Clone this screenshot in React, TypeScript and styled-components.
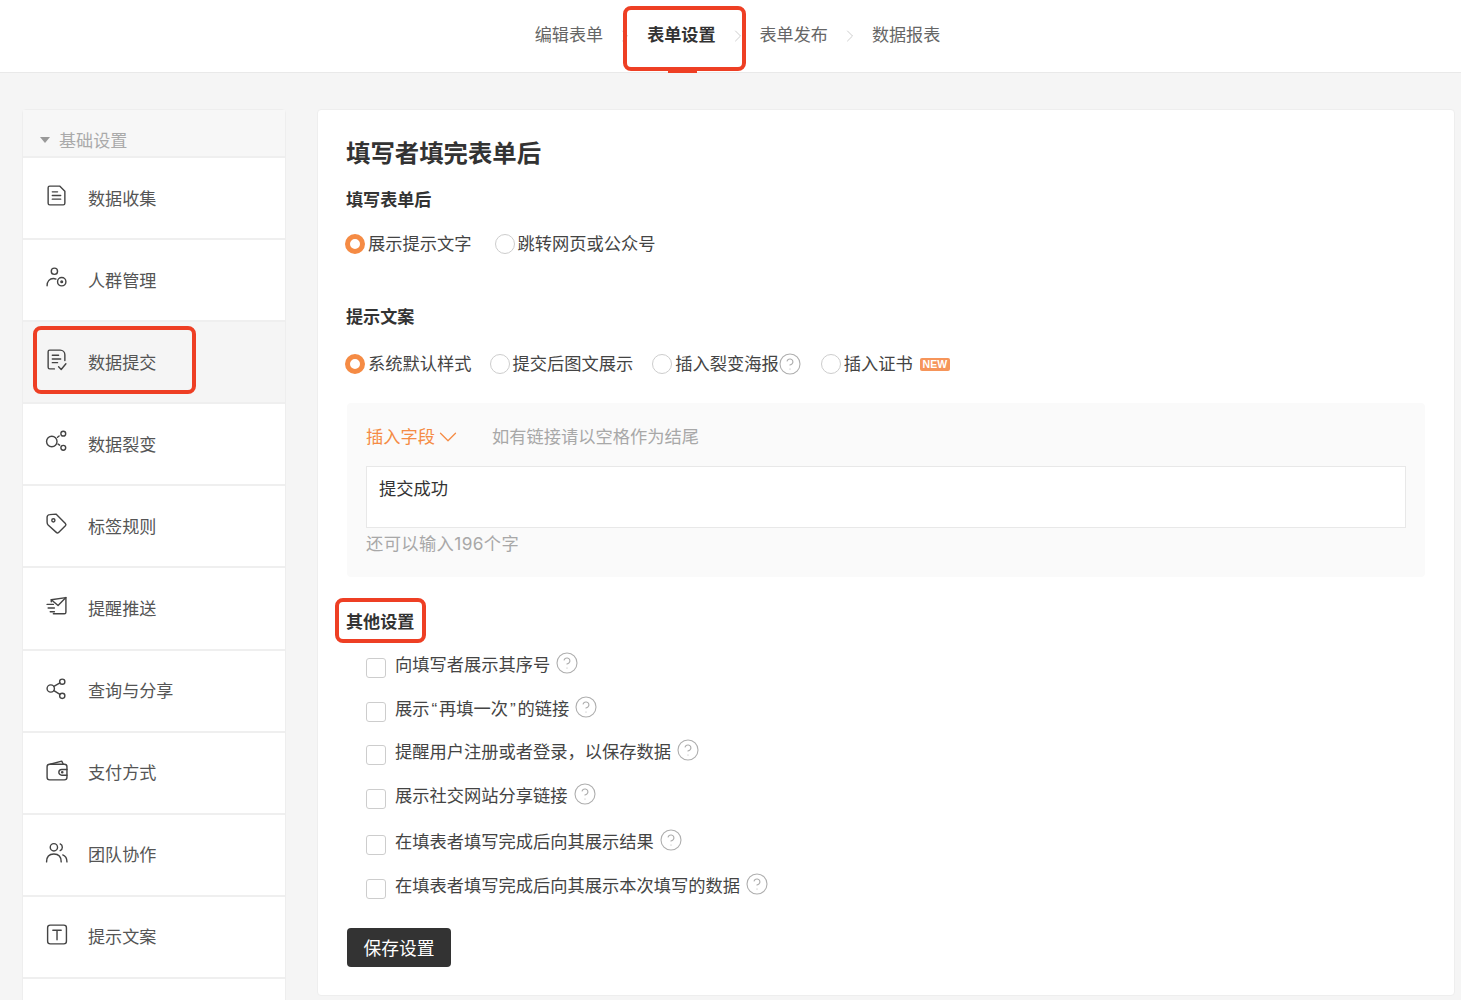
import React from "react";
import styled, { createGlobalStyle } from "styled-components";
import { ChevronDown, ChevronRight, CircleHelp } from "lucide-react";

const Global = createGlobalStyle`
  html, body { margin: 0; padding: 0; background: #f5f5f5; }
  body { font-family: "Liberation Sans", "Noto Sans CJK SC", sans-serif; font-size: 17.25px; color: #444; }
`;

const Page = styled.div`
  height: 1000px;
  overflow: hidden;
  background: #f5f5f5;
`;

const TopBar = styled.header`
  height: 73px;
  box-sizing: border-box;
  background: #fff;
  border-bottom: 1px solid #e9e9e9;
  display: flex;
  align-items: center;
  justify-content: center;
  padding-left: 14px;
`;

const Step = styled.div<{ $active?: boolean }>`
  position: relative;
  font-size: 17.1px;
  line-height: 24px;
  font-weight: ${(p) => (p.$active ? 700 : 400)};
  color: ${(p) => (p.$active ? "#333" : "#666")};
`;

const StepUnderline = styled.span`
  position: absolute;
  left: 21px;
  bottom: -25px;
  width: 29px;
  height: 2px;
  background: #ee3f24;
`;

const StepArrow = styled.span`
  width: 44px;
  display: flex;
  justify-content: center;
  color: #c4c4c4;
`;

const Highlight = styled.span<{ $l: number; $t: number; $w: number; $h: number }>`
  position: absolute;
  left: ${(p) => p.$l}px;
  top: ${(p) => p.$t}px;
  width: ${(p) => p.$w}px;
  height: ${(p) => p.$h}px;
  box-sizing: border-box;
  border: 4px solid #ee3f24;
  border-radius: 8px;
  pointer-events: none;
`;

const Body = styled.div`
  display: flex;
  align-items: flex-start;
  gap: 31px;
  padding: 36px 6px 0 22px;
`;

const Sidebar = styled.aside`
  width: 264px;
  flex: none;
  box-sizing: border-box;
  border: 1px solid #eeeeee;
  border-radius: 4px 4px 0 0;
  background: #fff;
  font-size: 17.1px;
`;

const SideHead = styled.div`
  height: 48px;
  box-sizing: border-box;
  background: #f7f7f7;
  border-bottom: 2px solid #efefef;
  display: flex;
  align-items: flex-end;
  padding: 0 0 1px 17px;
  gap: 9px;
  line-height: 26px;
  color: #aaa;
`;

const Caret = styled.i`
  width: 0;
  height: 0;
  margin-bottom: 12px;
  border-left: 5px solid transparent;
  border-right: 5px solid transparent;
  border-top: 6px solid #999;
`;

const SideRow = styled.div<{ $active?: boolean }>`
  position: relative;
  height: 82.1px;
  box-sizing: border-box;
  border-bottom: 2px solid #efefef;
  background: ${(p) => (p.$active ? "#f5f5f5" : "#fff")};
  display: flex;
  align-items: center;
  padding: 0 0 0 22px;
  gap: 20px;
  color: #555;
`;

const SideIcon = styled.svg`
  width: 23px;
  height: 23px;
  flex: none;
  margin-top: -5px;
  fill: none;
  stroke: #444;
  stroke-width: 1.35;
  stroke-linecap: round;
  stroke-linejoin: round;
`;

const SideLabel = styled.span`
  line-height: 24px;
  margin-top: 3px;
`;

const Panel = styled.main`
  flex: 1;
  height: 887px;
  box-sizing: border-box;
  background: #fff;
  border: 1px solid #eeeeee;
  border-radius: 4px;
  padding: 24px 29px 0;
`;

const Title = styled.h1`
  margin: 0 0 0 -1px;
  font-size: 24.4px;
  line-height: 40px;
  font-weight: 700;
  color: #333;
`;

const Label = styled.h2<{ $top: number }>`
  position: relative;
  margin: ${(p) => p.$top}px 0 0 -1px;
  font-size: 17.1px;
  line-height: 26px;
  font-weight: 700;
  color: #333;
`;

const RadioRow = styled.div<{ $top: number }>`
  display: flex;
  align-items: center;
  height: 24px;
  margin: ${(p) => p.$top}px 0 0 -2px;
`;

const RadioItem = styled.label<{ $gap?: number }>`
  display: flex;
  align-items: center;
  gap: 3px;
  margin-right: ${(p) => p.$gap ?? 0}px;
  line-height: 24px;
  color: #444;
`;

const RadioDot = styled.span<{ $on?: boolean }>`
  width: 20px;
  height: 20px;
  box-sizing: border-box;
  border-radius: 50%;
  flex: none;
  border: ${(p) => (p.$on ? "5.5px solid #f58b44" : "1.5px solid #cdcdcd")};
  background: #fff;
`;

const NewTag = styled.span`
  margin-left: 4px;
  width: 30px;
  height: 13px;
  border-radius: 2px;
  background: #f6955a;
  color: #fff;
  font: 700 10.5px/13px "Liberation Sans", sans-serif;
  text-align: center;
`;

const Help = styled(CircleHelp)`
  color: #aeaeae;
  flex: none;
`;

const RadioHelp = styled(Help)`
  margin-left: -4px;
`;

const CopyBox = styled.section`
  margin-top: 27px;
  height: 174px;
  box-sizing: border-box;
  background: #fafafa;
  border-radius: 4px;
  padding: 22px 19px 0;
`;

const CopyTools = styled.div`
  display: flex;
  align-items: center;
  line-height: 24px;
  height: 24px;
`;

const InsertField = styled.span`
  display: flex;
  align-items: center;
  width: 126px;
  color: #f58b44;
`;

const InsertChevron = styled(ChevronDown)`
  margin: -3px 0 -3px -2px;
`;

const Hint = styled.span`
  color: #a8a8a8;
`;

const TextBox = styled.div`
  margin-top: 17px;
  height: 62px;
  box-sizing: border-box;
  background: #fff;
  border: 1px solid #e8e8e8;
  padding: 10px 12px;
  line-height: 24px;
  color: #333;
`;

const Counter = styled.div`
  margin-top: 4px;
  line-height: 24px;
  color: #a8a8a8;
  letter-spacing: 0.4px;
  font-family: Inter, "Noto Sans CJK SC", sans-serif;
`;

const CheckRow = styled.label<{ $top: number }>`
  display: flex;
  align-items: flex-start;
  height: 24px;
  margin: ${(p) => p.$top}px 0 0 19px;
  line-height: 24px;
  color: #444;
`;

const CheckBox = styled.span`
  width: 20px;
  height: 20px;
  box-sizing: border-box;
  margin: 5px 9px 0 0;
  border: 1.5px solid #cdcdcd;
  border-radius: 3px;
  background: #fff;
  flex: none;
`;

const CheckText = styled.span`
  white-space: nowrap;
`;

const CurlyQuote = styled.span`
  margin: 0 1.9px;
`;

const CheckHelp = styled.span`
  margin: -2px 0 0 5px;
  display: flex;
`;

const SaveButton = styled.button`
  display: block;
  margin-top: 30px;
  width: 104px;
  height: 39px;
  border: 0;
  border-radius: 4px;
  background: #333;
  color: #fff;
  font: inherit;
  font-size: 17.75px;
  padding: 0 0 2px;
`;

const icons: React.ReactNode[] = [
  <>
    <path d="M3 3.500A1.500 1.500 0 0 1 4.500 2H14l5 5v11.500a1.500 1.500 0 0 1-1.500 1.500h-13A1.500 1.500 0 0 1 3 18.500z" />
    <path d="M7 7.500h5M7 11h8M7 14.500h8" />
  </>,
  <>
    <circle cx="9" cy="5" r="3" />
    <path d="M2 19c0-4.500 2.500-7 6-7 1 0 1.800.2 2.500.5" />
    <circle cx="16" cy="15" r="4" />
    <circle cx="16" cy="15" r=".8" />
  </>,
  <>
    <path d="M9 20H4.500A1.500 1.500 0 0 1 3 18.500v-15A1.500 1.500 0 0 1 4.500 2h10A4.500 4.500 0 0 1 19 6.500V12" />
    <path d="M7 7h6M7 10.500h8M7 14h5" />
    <path d="M13 18l2.500 2.500L20 15" />
  </>,
  <>
    <circle cx="6.500" cy="11" r="5" />
    <circle cx="17.500" cy="3.500" r="2.300" />
    <circle cx="17.500" cy="17" r="2.300" />
    <path d="M12 7l1.500-1.200M12.500 13.500l1.500 1" />
  </>,
  <>
    <path d="M2 5a2.500 2.500 0 0 1 2.500-2.500L10.500 2l9 9a1.600 1.600 0 0 1 0 2.200L13 19.500a1.600 1.600 0 0 1-2.200 0L3 12.500C2 11.500 2 10.500 2 9.500z" />
    <circle cx="8" cy="8" r="1.500" />
  </>,
  <>
    <path d="M6 6.500V4.500L20 2.500v14a1.500 1.500 0 0 1-1.500 1.500H8" />
    <path d="M6 4.500L12.500 10 20 2.500" />
    <path d="M2 9h6M3 12.500h6M5 16h4" />
  </>,
  <>
    <circle cx="5.500" cy="11" r="3.500" />
    <circle cx="16.500" cy="4.500" r="2.500" />
    <circle cx="16.500" cy="18" r="2.500" />
    <path d="M8.500 9l5.800-3.300M8.500 13l5.800 3.700" />
  </>,
  <>
    <rect x="2" y="5" width="19" height="15" rx="2.500" />
    <path d="M5 5l11-3 1.500 3" />
    <path d="M21 10h-5a2.500 2.500 0 0 0 0 5.500h5" />
    <circle cx="16.500" cy="12.700" r=".6" />
  </>,
  <>
    <circle cx="8.500" cy="6" r="3.500" />
    <path d="M1.500 20c0-5 3-7.500 7-7.500s7 2.500 7 7.500" />
    <path d="M14.500 2.800a3.500 3.500 0 0 1 0 6.400M17 13.300c2.500 1 4 3.300 4 6.700" />
  </>,
  <>
    <rect x="2.500" y="2" width="18" height="18" rx="2.500" />
    <path d="M7.500 7h8M11.500 7v9" />
  </>,
];

const rows = ["数据收集", "人群管理", "数据提交", "数据裂变", "标签规则", "提醒推送", "查询与分享", "支付方式", "团队协作", "提示文案"];

const checks: [React.ReactNode, number][] = [
  ["向填写者展示其序号", 17],
  [<>展示<CurlyQuote>“</CurlyQuote>再填一次<CurlyQuote>”</CurlyQuote>的链接</>, 20],
  ["提醒用户注册或者登录，以保存数据", 19],
  ["展示社交网站分享链接", 20],
  ["在填表者填写完成后向其展示结果", 22],
  ["在填表者填写完成后向其展示本次填写的数据", 20],
];

export default function App() {
  return (
    <Page>
      <Global />
      <TopBar>
        <Step>编辑表单</Step>
        <StepArrow><ChevronRight size={20} strokeWidth={1} /></StepArrow>
        <Step $active>
          表单设置
          <StepUnderline />
          <Highlight $l={-24} $t={-18} $w={123} $h={65} />
        </Step>
        <StepArrow><ChevronRight size={20} strokeWidth={1} /></StepArrow>
        <Step>表单发布</Step>
        <StepArrow><ChevronRight size={20} strokeWidth={1} /></StepArrow>
        <Step>数据报表</Step>
      </TopBar>
      <Body>
        <Sidebar>
          <SideHead><Caret />基础设置</SideHead>
          {rows.map((r, i) => (
            <SideRow key={r} $active={i === 2}>
              <SideIcon viewBox="0 0 22 22">{icons[i]}</SideIcon>
              <SideLabel>{r}</SideLabel>
              {i === 2 && <Highlight $l={10} $t={4} $w={163} $h={68} />}
            </SideRow>
          ))}
          <SideRow />
        </Sidebar>
        <Panel>
          <Title>填写者填完表单后</Title>
          <Label $top={14}>填写表单后</Label>
          <RadioRow $top={18}>
            <RadioItem $gap={23}><RadioDot $on />展示提示文字</RadioItem>
            <RadioItem><RadioDot />跳转网页或公众号</RadioItem>
          </RadioRow>
          <Label $top={49}>提示文案</Label>
          <RadioRow $top={21}>
            <RadioItem $gap={18}><RadioDot $on />系统默认样式</RadioItem>
            <RadioItem $gap={19}><RadioDot />提交后图文展示</RadioItem>
            <RadioItem $gap={19}><RadioDot />插入裂变海报<RadioHelp size={24} strokeWidth={1.1} /></RadioItem>
            <RadioItem><RadioDot />插入证书<NewTag>NEW</NewTag></RadioItem>
          </RadioRow>
          <CopyBox>
            <CopyTools>
              <InsertField>插入字段<InsertChevron size={30} strokeWidth={1} /></InsertField>
              <Hint>如有链接请以空格作为结尾</Hint>
            </CopyTools>
            <TextBox>提交成功</TextBox>
            <Counter>还可以输入196个字</Counter>
          </CopyBox>
          <Label $top={33}>
            其他设置
            <Highlight $l={-11} $t={-12} $w={91} $h={45} />
          </Label>
          {checks.map(([t, top], i) => (
            <CheckRow key={i} $top={top}>
              <CheckBox />
              <CheckText>{t}</CheckText>
              <CheckHelp><Help size={24} strokeWidth={1.1} /></CheckHelp>
            </CheckRow>
          ))}
          <SaveButton>保存设置</SaveButton>
        </Panel>
      </Body>
    </Page>
  );
}
